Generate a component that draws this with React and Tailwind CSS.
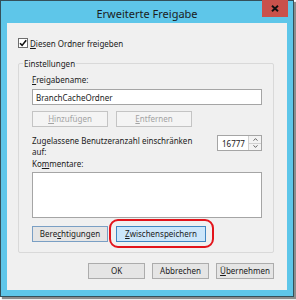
import React from "react";

const F = { fontFamily: '"Noto Sans", "Open Sans", sans-serif' };

function U({ children }) {
  return <span className="underline underline-offset-[1px] decoration-[0.8px]">{children}</span>;
}

function Btn({ children, w, disabled, className = "" }) {
  return (
    <div
      className={`h-[16px] flex items-center justify-center border text-[8px] leading-none ${
        disabled
          ? "border-[#c4c4c4] bg-[#f4f4f4] text-[#a3a3a3]"
          : "border-[#acacac] bg-[#e5e5e5] text-[#1a1a1a]"
      } ${w} ${className}`}
    >
      {children}
    </div>
  );
}

export default function App() {
  return (
    <div className="w-[296px] h-[300px] bg-white" style={F}>
      <div className="w-[294px] h-[297px] border border-[#34505a] bg-[#5ec6e9] flex flex-col shadow-[2px_2px_1px_rgba(0,0,0,0.45)]">
        {/* title bar */}
        <div className="relative h-[22px] flex items-center justify-center">
          <span className="text-[11px] text-[#1b1b1b] leading-none pt-[2px]">Erweiterte Freigabe</span>
          <div className="absolute -top-[1px] right-[5px] w-[26px] h-[17px] bg-[#c9514b] flex items-center justify-center">
            <svg width="8" height="7" viewBox="0 0 8 7">
              <path d="M1 0.8 L7 6.2 M7 0.8 L1 6.2" stroke="#111" strokeWidth="1.9" />
            </svg>
          </div>
        </div>
        {/* client */}
        <div className="mx-[6px] h-[267px] bg-[#f0f0f0] flex flex-col text-[8px] leading-[11px] text-[#1a1a1a]">
          <div className="flex items-center mt-[15px] ml-[11px] h-[10px]">
            <div className="w-[10px] h-[10px] border border-[#6e6e6e] bg-white flex items-center justify-center">
              <svg width="8" height="8" viewBox="0 0 8 8">
                <path d="M1 4.2 L3.1 6.4 L7.2 1.2" stroke="#111" strokeWidth="1.6" fill="none" />
              </svg>
            </div>
            <span className="ml-[2px]">
              <U>D</U>iesen Ordner freigeben
            </span>
          </div>

          {/* group box */}
          <div className="relative mt-[15px] ml-[11px] w-[256px] h-[190px] border border-[#d9d9d9] rounded-[2px] pl-[13px] pt-[10px] flex flex-col">
            <span className="absolute -top-[6px] left-[4px] px-[1px] bg-[#f0f0f0]">Einstellungen</span>
            <div>
              <U>F</U>reigabename:
            </div>
            <div className="mt-[4px] w-[230px] h-[16px] border border-[#a5a5a5] bg-white flex items-center pl-[3px]">
              BranchCacheOrdner
            </div>
            <div className="mt-[6px] flex gap-[8px]">
              <Btn w="w-[76px]" disabled>
                <U>H</U>inzufügen
              </Btn>
              <Btn w="w-[76px]" disabled>
                <U>E</U>ntfernen
              </Btn>
            </div>
            <div className="mt-[8px] w-[230px] flex justify-between items-start">
              <div className="w-[168px]">Zugelassene Benutzeranzahl einschränken auf:</div>
              <div className="h-[16px] w-[45px] border border-[#a5a5a5] bg-white flex">
                <div className="flex-1 flex items-center pl-[4px]">16777</div>
                <div className="w-[13px] flex flex-col border-l border-[#d0d0d0] bg-[#f3f3f3]">
                  <div className="flex-1 flex items-center justify-center border-b border-[#d0d0d0]">
                    <svg width="5" height="3" viewBox="0 0 5 3">
                      <path d="M0.5 2.7 L2.5 0.6 L4.5 2.7" stroke="#555" strokeWidth="0.9" fill="none" />
                    </svg>
                  </div>
                  <div className="flex-1 flex items-center justify-center">
                    <svg width="5" height="3" viewBox="0 0 5 3">
                      <path d="M0.5 0.3 L2.5 2.4 L4.5 0.3" stroke="#555" strokeWidth="0.9" fill="none" />
                    </svg>
                  </div>
                </div>
              </div>
            </div>
            <div className="mt-[1px]">
              Ko<U>m</U>mentare:
            </div>
            <div className="mt-[3px] w-[230px] h-[46px] border border-[#a5a5a5] bg-white" />
            <div className="mt-[8px] flex gap-[8px]">
              <Btn w="w-[76px]" className="!border-[#7a9fc4]">
                Bere<U>c</U>htigungen
              </Btn>
              <div className="relative">
                <Btn w="w-[90px]" className="!border-[#3f86c2] !bg-[#cce6fa]">
                  <U>Z</U>wischenspeichern
                </Btn>
                <div className="absolute -left-[7px] -top-[7px] -right-[8px] -bottom-[6px] border-[2.5px] border-[#e3141b] rounded-[9px]" />
              </div>
            </div>
          </div>

          {/* bottom buttons */}
          <div className="mt-[10px] mr-[13px] flex justify-end gap-[7px]">
            <Btn w="w-[57px]">OK</Btn>
            <Btn w="w-[57px]">Abbrechen</Btn>
            <Btn w="w-[58px]">
              <U>Ü</U>bernehmen
            </Btn>
          </div>
        </div>
      </div>
    </div>
  );
}
